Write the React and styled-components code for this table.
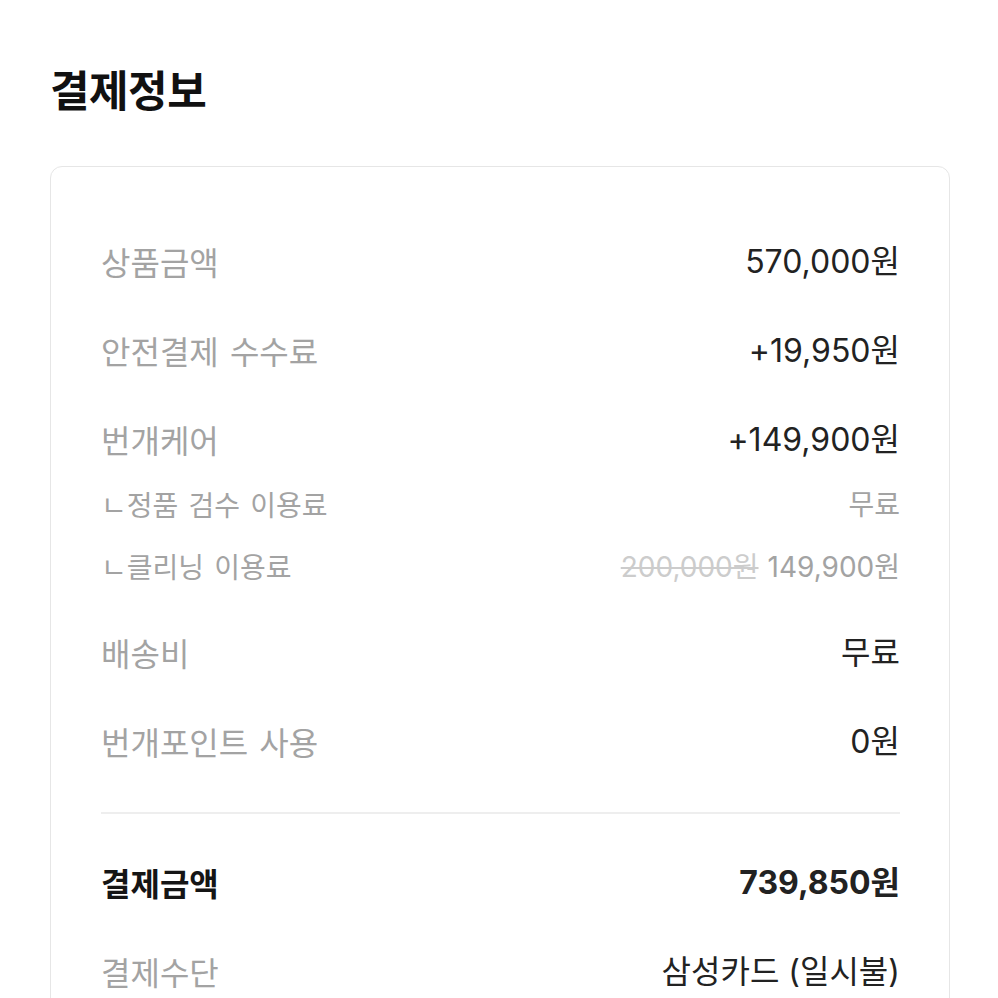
import React from "react";
import styled, { createGlobalStyle, css } from "styled-components";

const GlobalStyle = createGlobalStyle`
  html, body {
    margin: 0;
    padding: 0;
    background: #ffffff;
  }
  body {
    font-family: "Noto Sans CJK KR", "Noto Sans", sans-serif;
    color: #222222;
  }
`;

const Page = styled.div`
  padding: 60px 48px 0 50px;
`;

const Title = styled.h2`
  margin: 0 0 50px;
  font-size: 43px;
  line-height: 56px;
  font-weight: 700;
  color: #111111;
  letter-spacing: -0.5px;
`;

const Card = styled.section`
  border: 1px solid #e6e6e6;
  border-radius: 12px;
  padding: 73px 49px 80px 50px;
`;

const List = styled.div`
  display: flex;
  flex-direction: column;
  gap: 47px;
`;

const Group = styled.div`
  display: flex;
  flex-direction: column;
  gap: 26px;
`;

const Row = styled.div`
  display: flex;
  justify-content: space-between;
  align-items: center;
  font-size: ${({ sub }) => (sub ? "28px" : "32px")};
  line-height: ${({ sub }) => (sub ? "36px" : "42px")};
`;

const Label = styled.span`
  color: #a3a3a3;
  word-spacing: 4px;
  ${({ strong }) =>
    strong &&
    css`
      color: #151515;
      font-weight: 700;
    `}
`;

const Value = styled.span`
  font-family: Inter, "Noto Sans CJK KR", sans-serif;
  color: ${({ muted }) => (muted ? "#a3a3a3" : "#222222")};
  font-weight: ${({ strong }) => (strong ? 700 : 400)};
  position: relative;
  top: 1px;
`;

const Old = styled.s`
  color: #cccccc;
  margin-right: 9px;
`;

const Divider = styled.hr`
  border: none;
  height: 2px;
  background: #eeeeee;
  margin: 50px 0 47px;
`;

export default function App() {
  return (
    <>
      <GlobalStyle />
      <Page>
        <Title>결제정보</Title>
        <Card>
          <List>
            <Row>
              <Label>상품금액</Label>
              <Value>570,000원</Value>
            </Row>
            <Row>
              <Label>안전결제 수수료</Label>
              <Value>+19,950원</Value>
            </Row>
            <Group>
              <Row>
                <Label>번개케어</Label>
                <Value>+149,900원</Value>
              </Row>
              <Row sub>
                <Label>ㄴ정품 검수 이용료</Label>
                <Value muted>무료</Value>
              </Row>
              <Row sub>
                <Label>ㄴ클리닝 이용료</Label>
                <Value muted>
                  <Old>200,000원</Old>149,900원
                </Value>
              </Row>
            </Group>
            <Row>
              <Label>배송비</Label>
              <Value>무료</Value>
            </Row>
            <Row>
              <Label>번개포인트 사용</Label>
              <Value>0원</Value>
            </Row>
          </List>
          <Divider />
          <List>
            <Row>
              <Label strong>결제금액</Label>
              <Value strong>739,850원</Value>
            </Row>
            <Row>
              <Label>결제수단</Label>
              <Value>삼성카드 (일시불)</Value>
            </Row>
          </List>
        </Card>
      </Page>
    </>
  );
}
